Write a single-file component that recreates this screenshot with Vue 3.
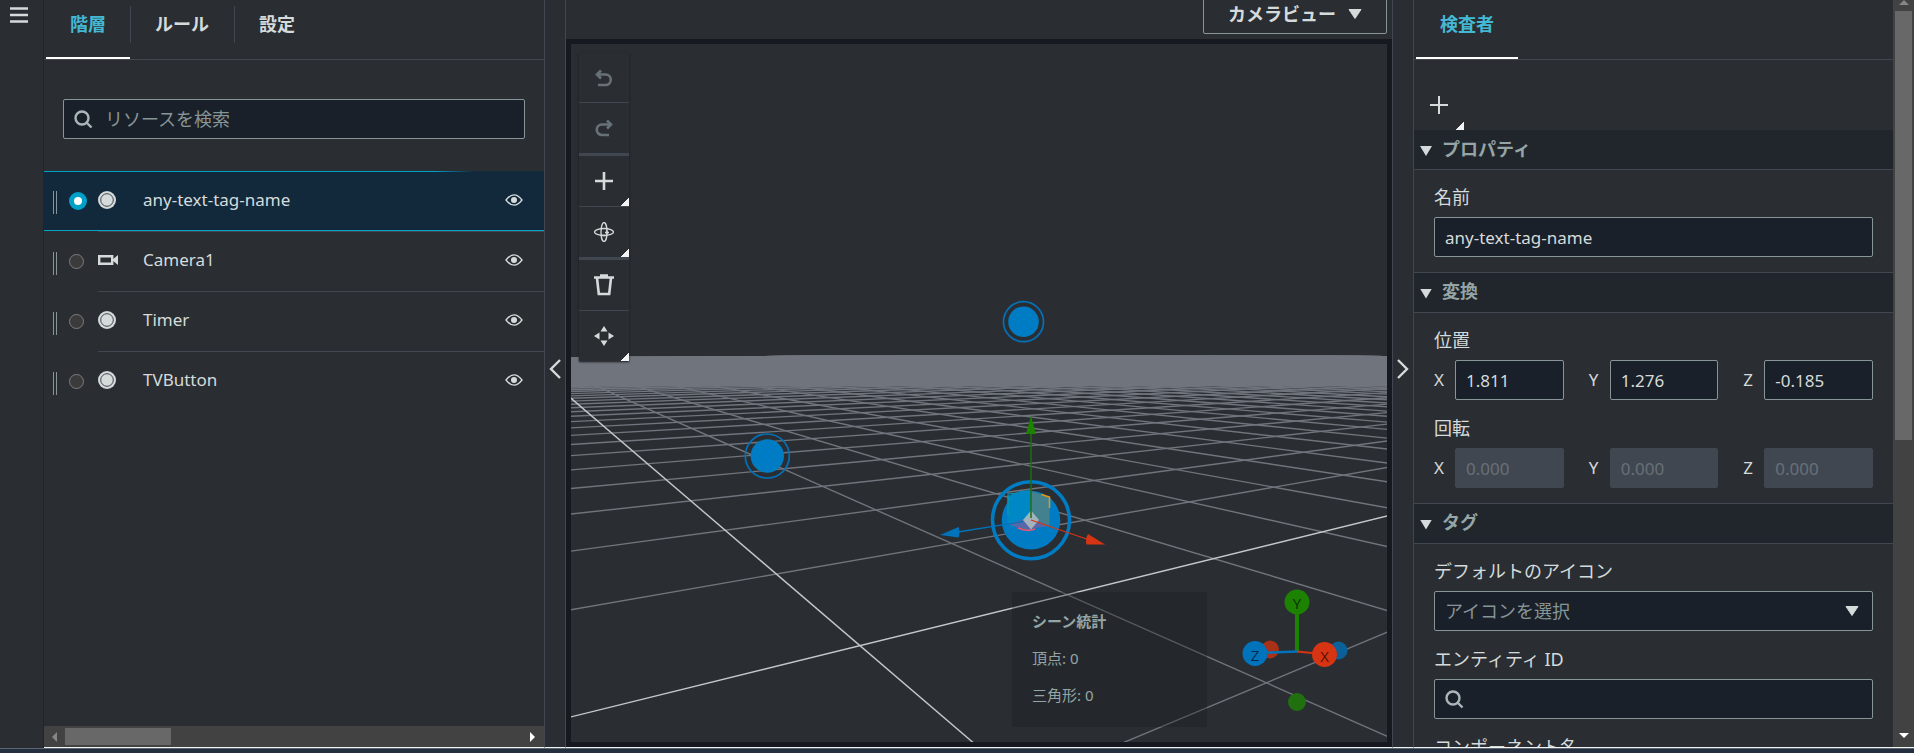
<script setup>
import { ref } from 'vue'

const nodes = [
  { id: 'tag', name: 'any-text-tag-name', icon: 'tag' },
  { id: 'camera', name: 'Camera1', icon: 'camera' },
  { id: 'timer', name: 'Timer', icon: 'tag' },
  { id: 'tv', name: 'TVButton', icon: 'tag' },
]
const selected = ref('tag')
const name = ref('any-text-tag-name')

const position = [
  { axis: 'X', value: '1.811' },
  { axis: 'Y', value: '1.276' },
  { axis: 'Z', value: '-0.185' },
]
const rotation = [
  { axis: 'X', value: '0.000' },
  { axis: 'Y', value: '0.000' },
  { axis: 'Z', value: '0.000' },
]

// Perspective projection of floor coordinates (u, v) onto the scene.
const project = (u, v) => {
  const w = 1 + 0.2084 * u + 0.32 * v
  return [(860 + 429.7 * u + 164.7 * v) / w, (645.7 + 72.9 * u + 112 * v) / w]
}
const segment = (a, b) => ({ x1: a[0], y1: a[1], x2: b[0], y2: b[1] })
const lines = []
for (let u = 1; u <= 110; u++) lines.push(segment(project(u, -2), project(u, 400)))
for (let v = -1; v <= 80; v++) if (v) lines.push(segment(project(-2, v), project(600, v)))
const axes = [
  segment(project(0, -2), project(0, 400)),
  segment(project(-2, 0), project(600, 0)),
]
</script>

<template>
  <div class="app">
    <div class="body">
      <nav class="rail">
        <button class="plain" aria-label="メニュー">
          <svg width="18" height="16" viewBox="0 0 18 16"><path d="M0 1.5h18M0 8h18M0 14.5h18" stroke="#d5dbdb" stroke-width="2.4" /></svg>
        </button>
      </nav>

      <section class="left">
        <div class="tabs">
          <button class="tab active">階層</button>
          <button class="tab">ルール</button>
          <button class="tab">設定</button>
        </div>
        <div class="search">
          <svg width="19" height="19" viewBox="0 0 19 19"><circle cx="8" cy="8" r="6.5" /><path d="M12.5 12.5l5 5" /></svg>
          <input type="text" placeholder="リソースを検索" aria-label="リソースを検索" />
        </div>
        <ul class="tree">
          <li v-for="n in nodes" :key="n.id" :class="{ on: selected === n.id }">
            <div class="lead">
              <i class="grip"></i>
              <input :id="n.id" v-model="selected" type="radio" name="node" :value="n.id" />
            </div>
            <div class="entry">
              <svg v-if="n.icon === 'tag'" class="kind" width="20" height="18" viewBox="0 0 20 18">
                <circle cx="9" cy="9" r="9" fill="#d5dbdb" /><circle cx="9" cy="9" r="6.3" fill="none" stroke="#414750" />
              </svg>
              <svg v-else class="kind" width="20" height="18" viewBox="0 0 20 18">
                <path d="M1.2 5.2h13v7.6h-13z" fill="none" stroke="#d5dbdb" stroke-width="2.4" />
                <path d="M14 9l6-5v10z" fill="#d5dbdb" />
              </svg>
              <label :for="n.id">{{ n.name }}</label>
              <button class="plain" aria-label="表示">
                <svg width="18" height="12" viewBox="0 0 18 12">
                  <path d="M1 6Q9-4.400 17 6Q9 16.400 1 6z" fill="none" stroke="#d5dbdb" stroke-width="1.3" /><circle cx="9" cy="6" r="3" fill="#d5dbdb" />
                </svg>
              </button>
            </div>
          </li>
        </ul>
        <div class="hscroll">
          <svg width="5" height="10" viewBox="0 0 5 10"><path d="M5 0v10L0 5z" fill="#868686" /></svg>
          <div class="hthumb"></div>
          <svg width="5" height="10" viewBox="0 0 5 10"><path d="M0 0v10l5-5z" fill="#fff" /></svg>
        </div>
      </section>

      <button class="gutter" aria-label="左パネルを閉じる">
        <svg width="12" height="20" viewBox="0 0 12 20"><path d="M11 1L2 10l9 9" /></svg>
      </button>

      <main class="center">
        <div class="topbar">
          <button class="camera">カメラビュー
            <svg width="14" height="10" viewBox="0 0 14 10"><path d="M1 .5h12L7 9.500z" fill="#d5dbdb" stroke="#d5dbdb" stroke-linejoin="round" /></svg>
          </button>
        </div>
        <div class="frame">
          <svg class="scene" viewBox="571 44 816 698" preserveAspectRatio="xMidYMid slice">
            <defs>
              <clipPath id="floor"><path d="M571 357L760 356L900 355L1150 355L1387 356V742H571z" /></clipPath>
              <linearGradient id="haze" x1="0" y1="0" x2="0" y2="1">
                <stop offset="0.7" stop-color="#70747c" /><stop offset="1" stop-color="#70747c" stop-opacity="0" />
              </linearGradient>
            </defs>
            <g clip-path="url(#floor)">
              <g stroke="#70747c" stroke-width="1.4"><line v-for="(l, i) in lines" :key="i" v-bind="l" /></g>
              <rect x="571" y="350" width="816" height="42" fill="url(#haze)" />
              <g stroke="#c3c9ca" stroke-width="1.4"><line v-for="(l, i) in axes" :key="i" v-bind="l" /></g>
              <rect x="571" y="350" width="816" height="36" fill="#70747c" />
            </g>
            <g fill="#007cc4">
              <circle cx="1023.500" cy="321.700" r="15.300" /><circle cx="1023.500" cy="321.700" r="20" fill="none" stroke="#0570b5" stroke-width="1.700" />
              <circle cx="767.300" cy="456" r="16.700" /><circle cx="767.300" cy="456" r="22" fill="none" stroke="#0570b5" stroke-width="1.700" />
              <circle cx="1031" cy="520.300" r="29.300" /><circle cx="1031" cy="520.300" r="38.500" fill="none" stroke="#007cc4" stroke-width="3.600" />
            </g>
            <path d="M1007.500 496l13-5 10.500-1v30l-23.500 4z" fill="#0088c6" />
            <path d="M1031 491l18.500 6v29l-18.500-6z" fill="#44818e" />
            <path d="M1008 524l23-7 18 9-25 4z" fill="#5668a8" />
            <path d="M1008 515v-21l9-1M1008 499h4" fill="none" stroke="#0e98ae" stroke-width="1.200" />
            <path d="M1041.500 494.500l8 2.500v11" fill="none" stroke="#e8960c" stroke-width="1.500" />
            <path d="M1018 528q9 4 17 1" fill="none" stroke="#e8556f" stroke-width="1.800" />
            <path d="M1031 510.500l8 9.500-8 9.500-8-9.500z" fill="#b3bfc0" fill-opacity="0.85" />
            <path d="M1031 518V433" stroke="#1f6f0d" stroke-width="1.500" />
            <path d="M1031 415.500l5 18.500h-10z" fill="#1d8102" />
            <path d="M1031 520l57 19.500" stroke="#d63412" stroke-width="1.300" />
            <path d="M1105 544.500l-17-10.500q-3 5-1.500 10.500z" fill="#d63412" />
            <path d="M1023 521.500L958 532" stroke="#0073bb" stroke-width="1.300" />
            <path d="M940 535l18.500-8q2 5 0 10.500z" fill="#0073bb" />
            <g class="gizmo">
              <circle cx="1270" cy="649.500" r="9" fill="#a83118" /><circle cx="1338.500" cy="650.500" r="9" fill="#0a6199" /><circle cx="1297" cy="702" r="9" fill="#21700f" />
              <path d="M1297 651.500V610" stroke="#1d8102" stroke-width="4" />
              <path d="M1298 651.500l-40 1.500" stroke="#0073bb" stroke-width="2.600" />
              <path d="M1297 651.500l25 2.500" stroke="#d63412" stroke-width="2.200" />
              <circle cx="1297" cy="602" r="12.500" fill="#1d8102" /><circle cx="1255" cy="653.500" r="12.500" fill="#0073bb" /><circle cx="1324.500" cy="654.500" r="12.500" fill="#d63412" />
              <text x="1297" y="609">Y</text><text x="1255" y="661">Z</text><text x="1324.500" y="662">X</text>
            </g>
          </svg>

          <div class="toolbar">
            <button class="dim" aria-label="元に戻す"><svg width="18" height="18" viewBox="0 0 18 18"><path d="M3 16h7.500a5.200 5.200 0 0 0 0-10.500H3" /><path d="M6 1.500L2 5.500l4 4" /></svg></button>
            <button class="dim thick" aria-label="やり直す"><svg width="18" height="18" viewBox="0 0 18 18"><path d="M14 16H7a5.200 5.200 0 0 1 0-10.500H15" /><path d="M12 1.500l4 4-4 4" /></svg></button>
            <button class="more" aria-label="追加"><svg width="18" height="18" viewBox="0 0 18 18"><path d="M9 0v18M0 9h18" /></svg></button>
            <button class="more thick" aria-label="回転"><svg width="20" height="20" viewBox="0 0 20 20" class="thin"><ellipse cx="10" cy="10" rx="9.500" ry="3.500" /><ellipse cx="10" cy="10" rx="3" ry="9.500" /><path d="M13 8.500v4M11 10.500h4M8.500 13.500h3" /></svg></button>
            <button aria-label="削除"><svg width="20" height="22" viewBox="0 0 20 22"><path d="M0 3.500h20M6 1.500h8M3 4l1.800 16h10.400L17 4" /></svg></button>
            <button class="more" aria-label="移動"><svg width="20" height="20" viewBox="0 0 20 20" class="solid"><path d="M10 0l3.500 5.500h-7zM10 20l3.500-5.500h-7zM0 10l5.500-3.500v7zM20 10l-5.500-3.500v7z" /></svg></button>
          </div>

          <div class="stats">
            <strong>シーン統計</strong>
            <span>頂点: 0</span>
            <span>三角形: 0</span>
          </div>
        </div>
      </main>

      <button class="gutter" aria-label="右パネルを閉じる">
        <svg width="12" height="20" viewBox="0 0 12 20"><path d="M1 1l9 9-9 9" /></svg>
      </button>

      <aside class="right">
        <div class="inspector">
          <div class="tabs">
            <button class="tab active">検査者</button>
          </div>
          <div class="addrow">
            <button class="plain add" aria-label="コンポーネントを追加"><svg width="18" height="18" viewBox="0 0 18 18"><path d="M9 0v18M0 9h18" stroke="#d5dbdb" stroke-width="2" /></svg></button>
          </div>

          <button class="head first"><i></i>プロパティ</button>
          <div class="fields">
            <div class="field">
              <label for="node-name">名前</label>
              <input id="node-name" v-model="name" class="box" type="text" />
            </div>
          </div>

          <button class="head"><i></i>変換</button>
          <div class="fields">
            <div class="field">
              <span class="title">位置</span>
              <div class="triple">
                <div v-for="p in position" :key="p.axis">
                  <label :for="'pos' + p.axis">{{ p.axis }}</label>
                  <input :id="'pos' + p.axis" class="box" type="text" :value="p.value" />
                </div>
              </div>
            </div>
            <div class="field">
              <span class="title">回転</span>
              <div class="triple">
                <div v-for="p in rotation" :key="p.axis">
                  <label :for="'rot' + p.axis">{{ p.axis }}</label>
                  <input :id="'rot' + p.axis" class="box" type="text" :value="p.value" disabled />
                </div>
              </div>
            </div>
          </div>

          <button class="head"><i></i>タグ</button>
          <div class="fields">
            <div class="field">
              <label for="icon">デフォルトのアイコン</label>
              <div class="drop">
                <select id="icon" class="box"><option>アイコンを選択</option></select>
                <svg width="14" height="10" viewBox="0 0 14 10"><path d="M1 .5h12L7 9.500z" fill="#d5dbdb" stroke="#d5dbdb" stroke-linejoin="round" /></svg>
              </div>
            </div>
            <div class="field">
              <label for="entity">エンティティ ID</label>
              <div class="search inner">
                <svg width="19" height="19" viewBox="0 0 19 19"><circle cx="8" cy="8" r="6.5" /><path d="M12.5 12.5l5 5" /></svg>
                <input id="entity" type="text" />
              </div>
            </div>
            <div class="field">
              <label for="component">コンポーネント名</label>
              <input id="component" class="box" type="text" />
            </div>
          </div>
        </div>
        <div class="vscroll">
          <svg width="10" height="5" viewBox="0 0 10 5"><path d="M0 5h10L5 0z" fill="#868686" /></svg>
          <div class="vthumb"></div>
          <svg width="10" height="5" viewBox="0 0 10 5"><path d="M0 0h10L5 5z" fill="#fff" /></svg>
        </div>
      </aside>
    </div>
    <div class="footer"></div>
  </div>
</template>

<style>
body { background: #2a2e33; overflow: hidden; }
</style>

<style scoped>
.app, .app * { box-sizing: border-box; }
.app { display: flex; flex-direction: column; height: 100vh; color: #d5dbdb; background: #2a2e33; font: 17px/24px "Noto Sans", "Noto Sans CJK JP", sans-serif; }
.app button, .app input, .app select { font: inherit; color: inherit; margin: 0; }
.app button { background: none; border: 0; padding: 0; text-align: left; }
.app .plain { display: block; }
.app svg { display: block; flex: none; }
.body { flex: 1; min-height: 0; display: flex; }
.footer { flex: none; height: 5px; background: #232f3e; border-top: 1px solid #5d6571; }
.rail { flex: none; width: 44px; padding: 7px 10px; box-shadow: inset -1px 0 #212529; }
.left, .center, .right, .gutter { border-bottom: 1px solid #f2f3f3 !important; }
.left { flex: none; width: 500px; display: flex; flex-direction: column; overflow: hidden; }

.tabs { flex: none; display: flex; height: 60px; padding-left: 2px; border-bottom: 1px solid #414750; }
.app .tab { position: relative; height: 59px; padding: 0 25px 12px; font-size: 18px; font-weight: 700; }
.tab + .tab::before { content: ""; position: absolute; left: 0; top: 6px; height: 37px; border-left: 1px solid #414750; }
.app .tab.active { padding: 0 24px 10px; color: #44b9d6; border-bottom: 2px solid #fff; }

.search { flex: none; display: flex; align-items: center; gap: 12px; height: 40px; margin: 39px 19px 32px; padding: 0 10px; background: #1a2029; border: 1px solid #879596; border-radius: 2px; }
.search.inner { margin: 0; }
.search svg { fill: none; stroke: #aab7b8; stroke-width: 2.4; }
.app .search input { flex: 1; min-width: 0; height: 36px; padding: 0; border: 0; outline: 0; background: none; font-size: 18px; }
.search input::placeholder { color: #879596; opacity: 1; }

.tree { flex: 1; list-style: none; margin: 0; padding: 0; }
.tree li { display: flex; height: 60px; }
.tree li.on { background: linear-gradient(to right, #00a1c9 78%, #12293b 86%) top / 100% 1px no-repeat #12293b; border-bottom: 1px solid #00a1c9; }
.lead { flex: none; width: 54px; display: flex; align-items: center; padding-left: 9px; }
.grip { flex: none; width: 4px; height: 23px; margin: 4px 12px 0 0; border: solid #879596; border-width: 0 1px; }
.lead input { appearance: none; flex: none; width: 15px; height: 15px; border: 1px solid #7d7d7d; border-radius: 50%; background: #3b3b3b; }
.lead input:checked { width: 18px; height: 18px; border: 5px solid #00a1c9; background: #fff; }
.entry { flex: 1; display: flex; align-items: center; padding: 0 21px 3px 0; border-top: 1px solid #414750; }
.tree li.on .entry { border-color: transparent; padding-bottom: 2px; }
.kind { margin-right: 25px; }
.entry label { flex: 1; }

.hscroll { flex: none; display: flex; align-items: center; height: 21px; padding: 0 9px 0 8px; background: #424242; }
.hthumb { width: 106px; height: 17px; margin: 0 auto 0 8px; background: #686868; }

.app .gutter { flex: none; width: 22px; display: flex; align-items: center; justify-content: center; border: solid #414750; border-width: 0 1px; }
.gutter svg { margin-top: -10px; fill: none; stroke: #d5dbdb; stroke-width: 2.4; }

.center { flex: 1; min-width: 0; display: flex; flex-direction: column; }
.topbar { flex: none; height: 39px; display: flex; align-items: flex-end; justify-content: flex-end; padding: 0 5px 5px; overflow: hidden; }
.app .camera { flex: none; display: flex; align-items: center; gap: 12px; height: 41px; padding: 0 24px; border: 1px solid #879596; border-radius: 2px; font-size: 18px; font-weight: 700; }
.frame { position: relative; flex: 1; min-height: 0; border: 5px solid #16191f; }
.scene { width: 100%; height: 100%; }
.gizmo text { font: 15px "Open Sans", sans-serif; text-anchor: middle; fill: #000; fill-opacity: 0.65; }

.toolbar { position: absolute; left: 8px; top: 9px; width: 50px; display: flex; flex-direction: column; background: #2a2e33; box-shadow: 0 1px 2px #16191f; }
.app .toolbar button { position: relative; height: 51px; display: flex; align-items: center; justify-content: center; border-bottom: 1px solid #414750; }
.app .toolbar button:first-child { height: 50px; }
.app .toolbar .thick { height: 53px; border-bottom-width: 3px; }
.app .toolbar button:last-child { height: 50px; border-bottom: 0; }
.toolbar svg { fill: none; stroke: #d5dbdb; stroke-width: 2.6; }
.toolbar .dim svg { stroke: #687078; }
.toolbar svg.thin { stroke-width: 1.3; }
.toolbar svg.solid { fill: #d5dbdb; stroke: none; }
.more::after, .add::after { content: ""; position: absolute; right: 0; bottom: 0; width: 8px; height: 8px; background: linear-gradient(135deg, transparent 50%, #f2f3f3 50%); }

.stats { position: absolute; right: 180px; bottom: 15px; width: 195px; height: 135px; padding: 17px 20px; display: flex; flex-direction: column; gap: 13px; font-size: 15px; color: #95a5a6; background: rgba(22, 25, 31, 0.3); }

.right { flex: none; width: 500px; display: flex; overflow: hidden; }
.inspector { flex: 1; min-width: 0; }
.addrow { height: 70px; padding: 20px 0; }
.app .add { position: relative; display: flex; align-items: center; justify-content: center; width: 50px; height: 50px; }
.app .head { display: flex; align-items: center; gap: 10px; width: 100%; height: 41px; padding: 0 6px 3px; border: solid #414750; border-width: 1px 0; background: #21252c; color: #95a5a6; font-size: 18px; font-weight: 700; }
.app .head.first { height: 40px; border-top-color: #21252c; }
.head i { width: 12px; height: 10px; margin-top: 5px; background: #d5dbdb; clip-path: polygon(0 0, 100% 0, 50% 100%); }
.fields { display: flex; flex-direction: column; gap: 16px; padding: 15px 20px; }
.field { display: flex; flex-direction: column; gap: 8px; }
.field > label, .title { font-size: 18px; }
.app .box { width: 100%; min-width: 0; height: 40px; padding: 0 10px; background: #1a2029; border: 1px solid #879596; border-radius: 2px; outline: 0; }
.app .box:disabled { background: #414750; border-color: #414750; color: #687078; }
.triple { display: grid; grid-template-columns: 1fr 1fr 1fr; gap: 25px; }
.triple div { display: flex; align-items: center; }
.triple label { flex: none; width: 21px; }
.drop { position: relative; }
.app select.box { appearance: none; color: #879596; font-size: 18px; }
.drop svg { position: absolute; right: 14px; top: 15px; pointer-events: none; }
.vscroll { flex: none; width: 21px; display: flex; flex-direction: column; align-items: center; padding-bottom: 9px; background: #424242; }
.vthumb { width: 17px; height: 429px; margin: 6px 0 auto; background: #686868; }
</style>
